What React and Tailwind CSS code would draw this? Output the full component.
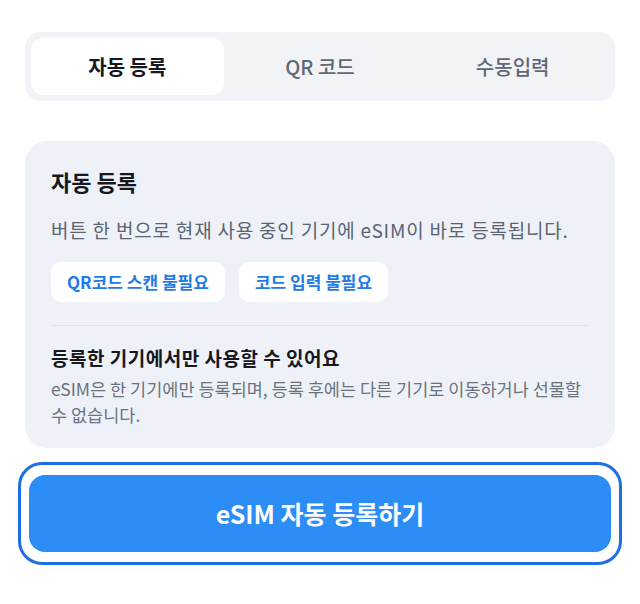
import { useState } from 'react';

const tabs = ['자동 등록', 'QR 코드', '수동입력'];

const App = () => {
  const [active, setActive] = useState(0);

  return (
    <div
      className="w-[640px] h-[604px] bg-white pt-[32px]"
      style={{ fontFamily: '"Noto Sans CJK KR", "Noto Sans", sans-serif' }}
    >
      {/* Tabs */}
      <div className="mx-[25px] h-[69px] rounded-[16px] bg-[#f2f3f6] p-[6px] grid grid-cols-3">
        {tabs.map((t, i) => (
          <button
            key={t}
            onClick={() => setActive(i)}
            className={`rounded-[12px] text-[20px] ${
              active === i ? 'bg-white font-bold text-[#16181d]' : 'font-medium text-[#5d6878]'
            }`}
          >
            {t}
          </button>
        ))}
      </div>

      {/* Info card */}
      <div className="mx-[25px] mt-[40px] rounded-[22px] bg-[#eef2f8] px-[26px] pt-[26px] pb-[20px]">
        <p className="text-[22px] leading-[28px] font-bold text-[#16181d]">자동 등록</p>
        <p className="mt-[23px] text-[19px] leading-[24px] tracking-[0.8px] text-[#5b6472]">
          버튼 한 번으로 현재 사용 중인 기기에 eSIM이 바로 등록됩니다.
        </p>
        <div className="mt-[20px] flex gap-[14px]">
          <span className="h-[40px] px-[16px] rounded-[10px] bg-white flex items-center text-[17px] font-semibold text-[#1f7be6]">
            QR코드 스캔 불필요
          </span>
          <span className="h-[40px] px-[16px] rounded-[10px] bg-white flex items-center text-[17px] font-semibold text-[#1f7be6]">
            코드 입력 불필요
          </span>
        </div>
        <div className="mt-[23px] h-px bg-[#dce2eb]" />
        <p className="mt-[19px] text-[19px] leading-[26px] tracking-[0.5px] font-semibold text-[#16181d]">
          등록한 기기에서만 사용할 수 있어요
        </p>
        <p className="mt-[5px] text-[17.5px] leading-[26px] text-[#6b7280]">
          eSIM은 한 기기에만 등록되며, 등록 후에는 다른 기기로 이동하거나 선물할 수 없습니다.
        </p>
      </div>

      {/* CTA with focus ring */}
      <div className="mx-[18px] mt-[14px] rounded-[24px] border-[3px] border-[#1e6fe3] px-[8px] py-[10px]">
        <button className="w-full h-[77px] rounded-[16px] bg-[#2b8df5] text-white text-[25px] font-semibold">
          eSIM 자동 등록하기
        </button>
      </div>
    </div>
  );
};

export default App;
